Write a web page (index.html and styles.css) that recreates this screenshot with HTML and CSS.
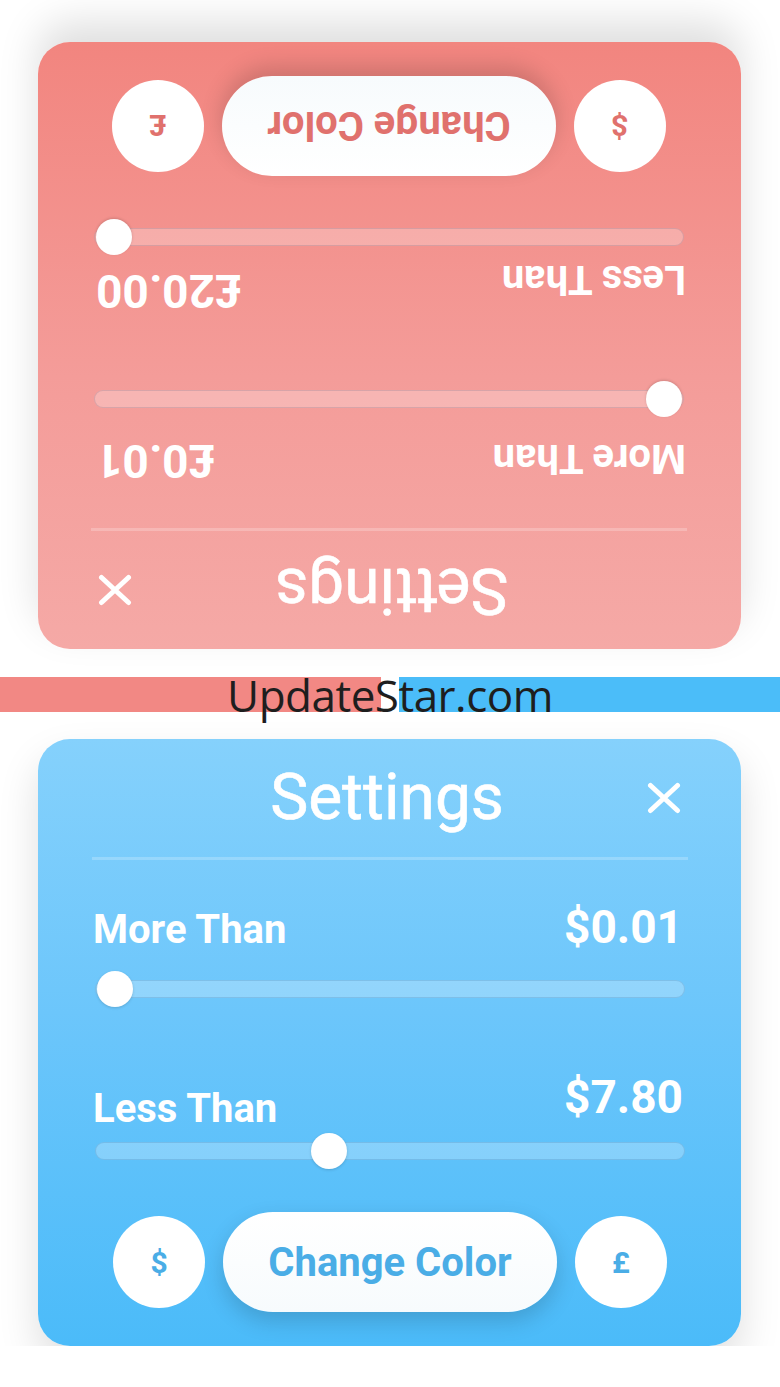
FILE: index.html
```html
<!DOCTYPE html>
<html lang="en">
<head>
<meta charset="utf-8">
<title>Settings</title>
<link rel="stylesheet" href="styles.css">
</head>
<body>
<main class="page">
  <section class="card card--red card--flipped">
    <header class="card-head">
      <span class="spacer"></span>
      <h1 class="title">Settings</h1>
      <button class="close" aria-label="Close">
        <svg width="34" height="32" viewBox="0 0 34 32"><path d="M3.5 3.5 L30.5 28.5 M30.5 3.5 L3.5 28.5" stroke="#fff" stroke-width="5" stroke-linecap="round" fill="none"/></svg>
      </button>
    </header>
    <div class="divider"></div>
    <div class="field field--first">
      <div class="field-row">
        <span class="label">More Than</span>
        <span class="value">£0.01</span>
      </div>
      <div class="slider"><div class="track"></div><div class="thumb" style="left: 2px"></div></div>
    </div>
    <div class="field field--second">
      <div class="field-row">
        <span class="label">Less Than</span>
        <span class="value value--raised">£20.00</span>
      </div>
      <div class="slider"><div class="track"></div><div class="thumb" style="left: 552px"></div></div>
    </div>
    <div class="actions">
      <button class="round">$</button>
      <button class="pill">Change Color</button>
      <button class="round">£</button>
    </div>
  </section>

  <div class="band">
    <div class="band-red"></div>
    <div class="band-gap"></div>
    <div class="band-blue"></div>
    <span class="watermark">UpdateStar.com</span>
  </div>

  <section class="card card--blue">
    <header class="card-head">
      <span class="spacer"></span>
      <h1 class="title">Settings</h1>
      <button class="close" aria-label="Close">
        <svg width="34" height="32" viewBox="0 0 34 32"><path d="M3.5 3.5 L30.5 28.5 M30.5 3.5 L3.5 28.5" stroke="#fff" stroke-width="5" stroke-linecap="round" fill="none"/></svg>
      </button>
    </header>
    <div class="divider"></div>
    <div class="field field--first">
      <div class="field-row">
        <span class="label">More Than</span>
        <span class="value">$0.01</span>
      </div>
      <div class="slider"><div class="track"></div><div class="thumb" style="left: 2px"></div></div>
    </div>
    <div class="field field--second">
      <div class="field-row">
        <span class="label">Less Than</span>
        <span class="value value--raised">$7.80</span>
      </div>
      <div class="slider"><div class="track"></div><div class="thumb" style="left: 216px"></div></div>
    </div>
    <div class="actions">
      <button class="round">$</button>
      <button class="pill">Change Color</button>
      <button class="round">£</button>
    </div>
  </section>
</main>
</body>
</html>
```
FILE: styles.css
```css
* { box-sizing: border-box; }

html, body {
  margin: 0;
  padding: 0;
  background: #ffffff;
}

body {
  font-family: Roboto, "Liberation Sans", Arial, sans-serif;
  color: #fff;
}

.page {
  padding-top: 42px;
  display: flex;
  flex-direction: column;
}

.card {
  margin: 0 39px 0 38px;
  height: 607px;
  border-radius: 32px;
  padding: 0 53px 34px 54px;
  display: flex;
  flex-direction: column;
  box-shadow: 0 20px 40px rgba(0, 0, 0, 0.13);
}

.card--blue {
  --accent: #4aade6;
  background: linear-gradient(180deg, #85d1fc 0%, #6cc6fb 45%, #4bbbf9 100%);
  margin-top: 27px;
}

.card--red {
  --accent: #e0716d;
  background: linear-gradient(180deg, #f5a9a6 0%, #f49c99 45%, #f2857f 100%);
}

.card--flipped {
  transform: rotate(180deg);
}

.card-head {
  height: 120px;
  display: grid;
  grid-template-columns: 1fr auto 1fr;
  align-items: center;
  margin: 0 -54px 0 -53px;
  padding: 0 61px 0 54px;
}

.title {
  margin: 0;
  font-size: 64px;
  font-weight: 400;
  line-height: 1;
  letter-spacing: 0;
  -webkit-text-stroke: 0.6px #fff;
}

.close {
  justify-self: end;
  background: none;
  border: 0;
  padding: 0;
  width: 34px;
  height: 32px;
  display: flex;
}

.divider {
  height: 3px;
  background: rgba(255, 255, 255, 0.22);
}

.field-row {
  display: flex;
  justify-content: space-between;
  align-items: flex-end;
}

.field--first .field-row { margin-top: 44px; }
.field--second .field-row { margin-top: 67px; }

.label {
  font-size: 40px;
  font-weight: 700;
  line-height: 1;
  margin-left: 1px;
}

.value {
  font-size: 46px;
  font-weight: 700;
  line-height: 1;
  margin-right: 5px;
}

.value--raised {
  margin-bottom: 9px;
}

.slider {
  position: relative;
  height: 36px;
  margin: 21px 3px 0 3px;
  display: flex;
  align-items: center;
}

.field--second .slider { margin-top: 4px; }

.track {
  flex: 1;
  height: 18px;
  border-radius: 9px;
  background: rgba(255, 255, 255, 0.25);
  border: 1px solid rgba(0, 50, 100, 0.13);
}

.thumb {
  position: absolute;
  top: 0;
  width: 36px;
  height: 36px;
  border-radius: 50%;
  background: #fff;
  box-shadow: 0 1px 3px rgba(0, 0, 0, 0.15);
}

.actions {
  margin-top: 43px;
  height: 100px;
  display: flex;
  align-items: center;
  justify-content: center;
  gap: 18px;
}

.round,
.pill {
  border: 0;
  background: #fff;
  color: var(--accent);
  font-family: Roboto, "Liberation Sans", Arial, sans-serif;
  font-weight: 700;
  padding: 0;
}

.round {
  width: 92px;
  height: 92px;
  border-radius: 50%;
  font-size: 30px;
}

.pill {
  width: 334px;
  height: 100px;
  border-radius: 50px;
  font-size: 40px;
  box-shadow: 0 9px 22px rgba(0, 0, 0, 0.16);
  background: linear-gradient(180deg, #ffffff 0%, #f7fbfd 100%);
}

.band {
  position: relative;
  margin-top: 28px;
  height: 35px;
  display: grid;
  grid-template-columns: 381px 18px 1fr;
}

.band-red { background: #f28884; }
.band-gap { background: #ffffff; }
.band-blue { background: #4bbdf9; }

.watermark {
  position: absolute;
  left: 0;
  right: 0;
  bottom: -5px;
  text-align: center;
  font-family: "Open Sans", "Noto Sans", sans-serif;
  font-weight: 400;
  font-size: 44px;
  line-height: 44px;
  letter-spacing: -0.5px;
  color: #1e1e1e;
}
```
